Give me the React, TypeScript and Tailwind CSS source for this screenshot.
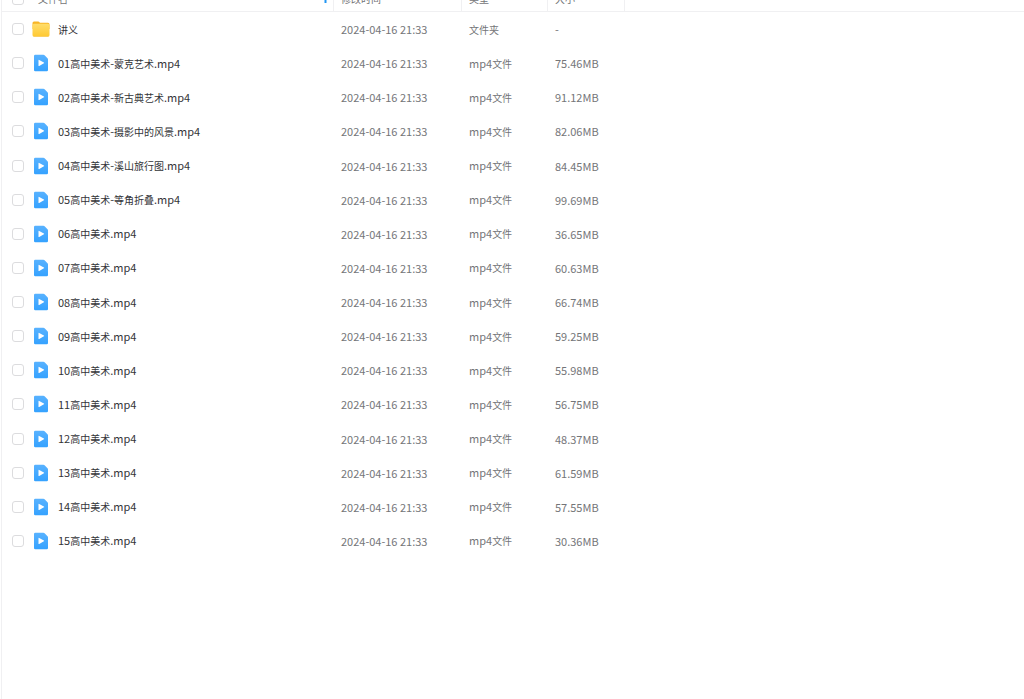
import { Fragment } from "react";

type FileRow = {
  name: string;
  modified: string;
  kind: string;
  size: string;
  folder?: boolean;
};

const MODIFIED = "2024-04-16 21:33";

const video = (name: string, size: string): FileRow => ({
  name,
  modified: MODIFIED,
  kind: "mp4文件",
  size,
});

const rows: FileRow[] = [
  { name: "讲义", modified: MODIFIED, kind: "文件夹", size: "-", folder: true },
  video("01高中美术-蒙克艺术.mp4", "75.46MB"),
  video("02高中美术-新古典艺术.mp4", "91.12MB"),
  video("03高中美术-摄影中的风景.mp4", "82.06MB"),
  video("04高中美术-溪山旅行图.mp4", "84.45MB"),
  video("05高中美术-等角折叠.mp4", "99.69MB"),
  video("06高中美术.mp4", "36.65MB"),
  video("07高中美术.mp4", "60.63MB"),
  video("08高中美术.mp4", "66.74MB"),
  video("09高中美术.mp4", "59.25MB"),
  video("10高中美术.mp4", "55.98MB"),
  video("11高中美术.mp4", "56.75MB"),
  video("12高中美术.mp4", "48.37MB"),
  video("13高中美术.mp4", "61.59MB"),
  video("14高中美术.mp4", "57.55MB"),
  video("15高中美术.mp4", "30.36MB"),
];

/* Sets Han runs one size below the Latin text beside them. */
function Mixed({ text }: { text: string }) {
  return (
    <>
      {text.split(/([\u4e00-\u9fff]+)/).map((part, i) =>
        i % 2 ? (
          <span key={i} className="text-[10px]">
            {part}
          </span>
        ) : (
          <Fragment key={i}>{part}</Fragment>
        ),
      )}
    </>
  );
}

function Check({ label }: { label: string }) {
  return (
    <input
      type="checkbox"
      aria-label={label}
      className="size-3 shrink-0 appearance-none rounded-[3px] border border-[#dcdcde] bg-white checked:border-[#2f9dff] checked:bg-[#2f9dff]"
    />
  );
}

function FolderIcon() {
  return (
    <svg viewBox="0 0 18 16" className="h-4 w-[18px] shrink-0" aria-hidden="true">
      <defs>
        <linearGradient id="folder" x1="0" y1="0" x2="0" y2="1">
          <stop offset="0" stopColor="#ffdd6b" />
          <stop offset="1" stopColor="#ffc933" />
        </linearGradient>
      </defs>
      <path d="M.5 2Q.5.5 2 .5h4.3q.6 0 1 .5l.6.7h8.1q1.500 0 1.500 1.500V8H.5z" fill="#f8b526" />
      <rect x=".5" y="2.700" width="17" height="12.800" rx="1.500" fill="url(#folder)" />
      <path d="M1.200 15h15.600q-.4.500-1 .5H2.200q-.6 0-1-.5z" fill="#f7b92e" />
    </svg>
  );
}

function VideoIcon() {
  return (
    <svg viewBox="0 0 18 18" className="size-[18px] shrink-0" aria-hidden="true">
      <defs>
        <linearGradient id="video" x1="0" y1="0" x2="0" y2="1">
          <stop offset="0" stopColor="#58b2ff" />
          <stop offset="1" stopColor="#35a2ff" />
        </linearGradient>
      </defs>
      <path
        d="M3.300 .8h8.100q.7 0 1.200.5l2.900 2.900q.5.500.5 1.200V15.900q0 1.300-1.300 1.300H3.300Q2 17.200 2 15.900V2.100Q2 .8 3.300 .8z"
        fill="url(#video)"
      />
      <path d="M6.500 6.300q0-.8.700-.4l4.700 2.600q.6.400 0 .8l-4.700 2.600q-.7.400-.7-.4z" fill="#fff" />
    </svg>
  );
}

const headCell = "border-r border-b border-[#f0f0f2] px-[7px] text-left font-normal";

export default function App() {
  return (
    <main className="min-h-screen overflow-hidden bg-white pl-px font-['Noto_Sans_CJK_SC','Noto_Sans',sans-serif] text-[11px] leading-4 text-[#747578]">
      <div className="flow-root min-h-screen border-l border-[#f0f0f2]">
        <table className="-mt-3.5 h-[572px] w-full table-fixed border-separate border-spacing-0">
          <colgroup>
            <col className="w-[30px]" />
            <col className="w-[302px]" />
            <col className="w-32" />
            <col className="w-[86px]" />
            <col className="w-[77px]" />
            <col />
          </colgroup>
          <thead>
            <tr className="h-[26px]">
              <th className="border-b border-[#f0f0f2] pl-2.5">
                <div className="flex">
                  <Check label="全选" />
                </div>
              </th>
              <th className="border-r border-b border-[#f0f0f2] pr-1 pl-1.5 text-left font-normal">
                <div className="flex items-center justify-between">
                  <span>
                    <Mixed text="文件名" />
                  </span>
                  <svg viewBox="0 0 7 8" className="h-2 w-[7px]" aria-hidden="true">
                    <path d="M3.500 8V1M.5 3.800l3-3 3 3" stroke="#2196f3" strokeWidth="2" fill="none" />
                  </svg>
                </div>
              </th>
              <th className={headCell}>
                <Mixed text="修改时间" />
              </th>
              <th className={headCell}>
                <Mixed text="类型" />
              </th>
              <th className={headCell}>
                <Mixed text="大小" />
              </th>
              <td className="border-b border-[#f0f0f2]" />
            </tr>
          </thead>
          <tbody>
            {rows.map((row) => (
              <tr key={row.name} className="h-[34px]">
                <td className="pl-2.5">
                  <div className="flex">
                    <Check label={row.name} />
                  </div>
                </td>
                <td>
                  <div className="flex items-center gap-2 whitespace-nowrap text-[#333438]">
                    <span className="flex w-[18px] justify-center">
                      {row.folder ? <FolderIcon /> : <VideoIcon />}
                    </span>
                    <span>
                      <Mixed text={row.name} />
                    </span>
                  </div>
                </td>
                <td className="px-[7px] whitespace-nowrap">{row.modified}</td>
                <td className="px-[7px] whitespace-nowrap">
                  <Mixed text={row.kind} />
                </td>
                <td className="px-[7px] whitespace-nowrap">{row.size}</td>
                <td />
              </tr>
            ))}
          </tbody>
        </table>
      </div>
    </main>
  );
}
